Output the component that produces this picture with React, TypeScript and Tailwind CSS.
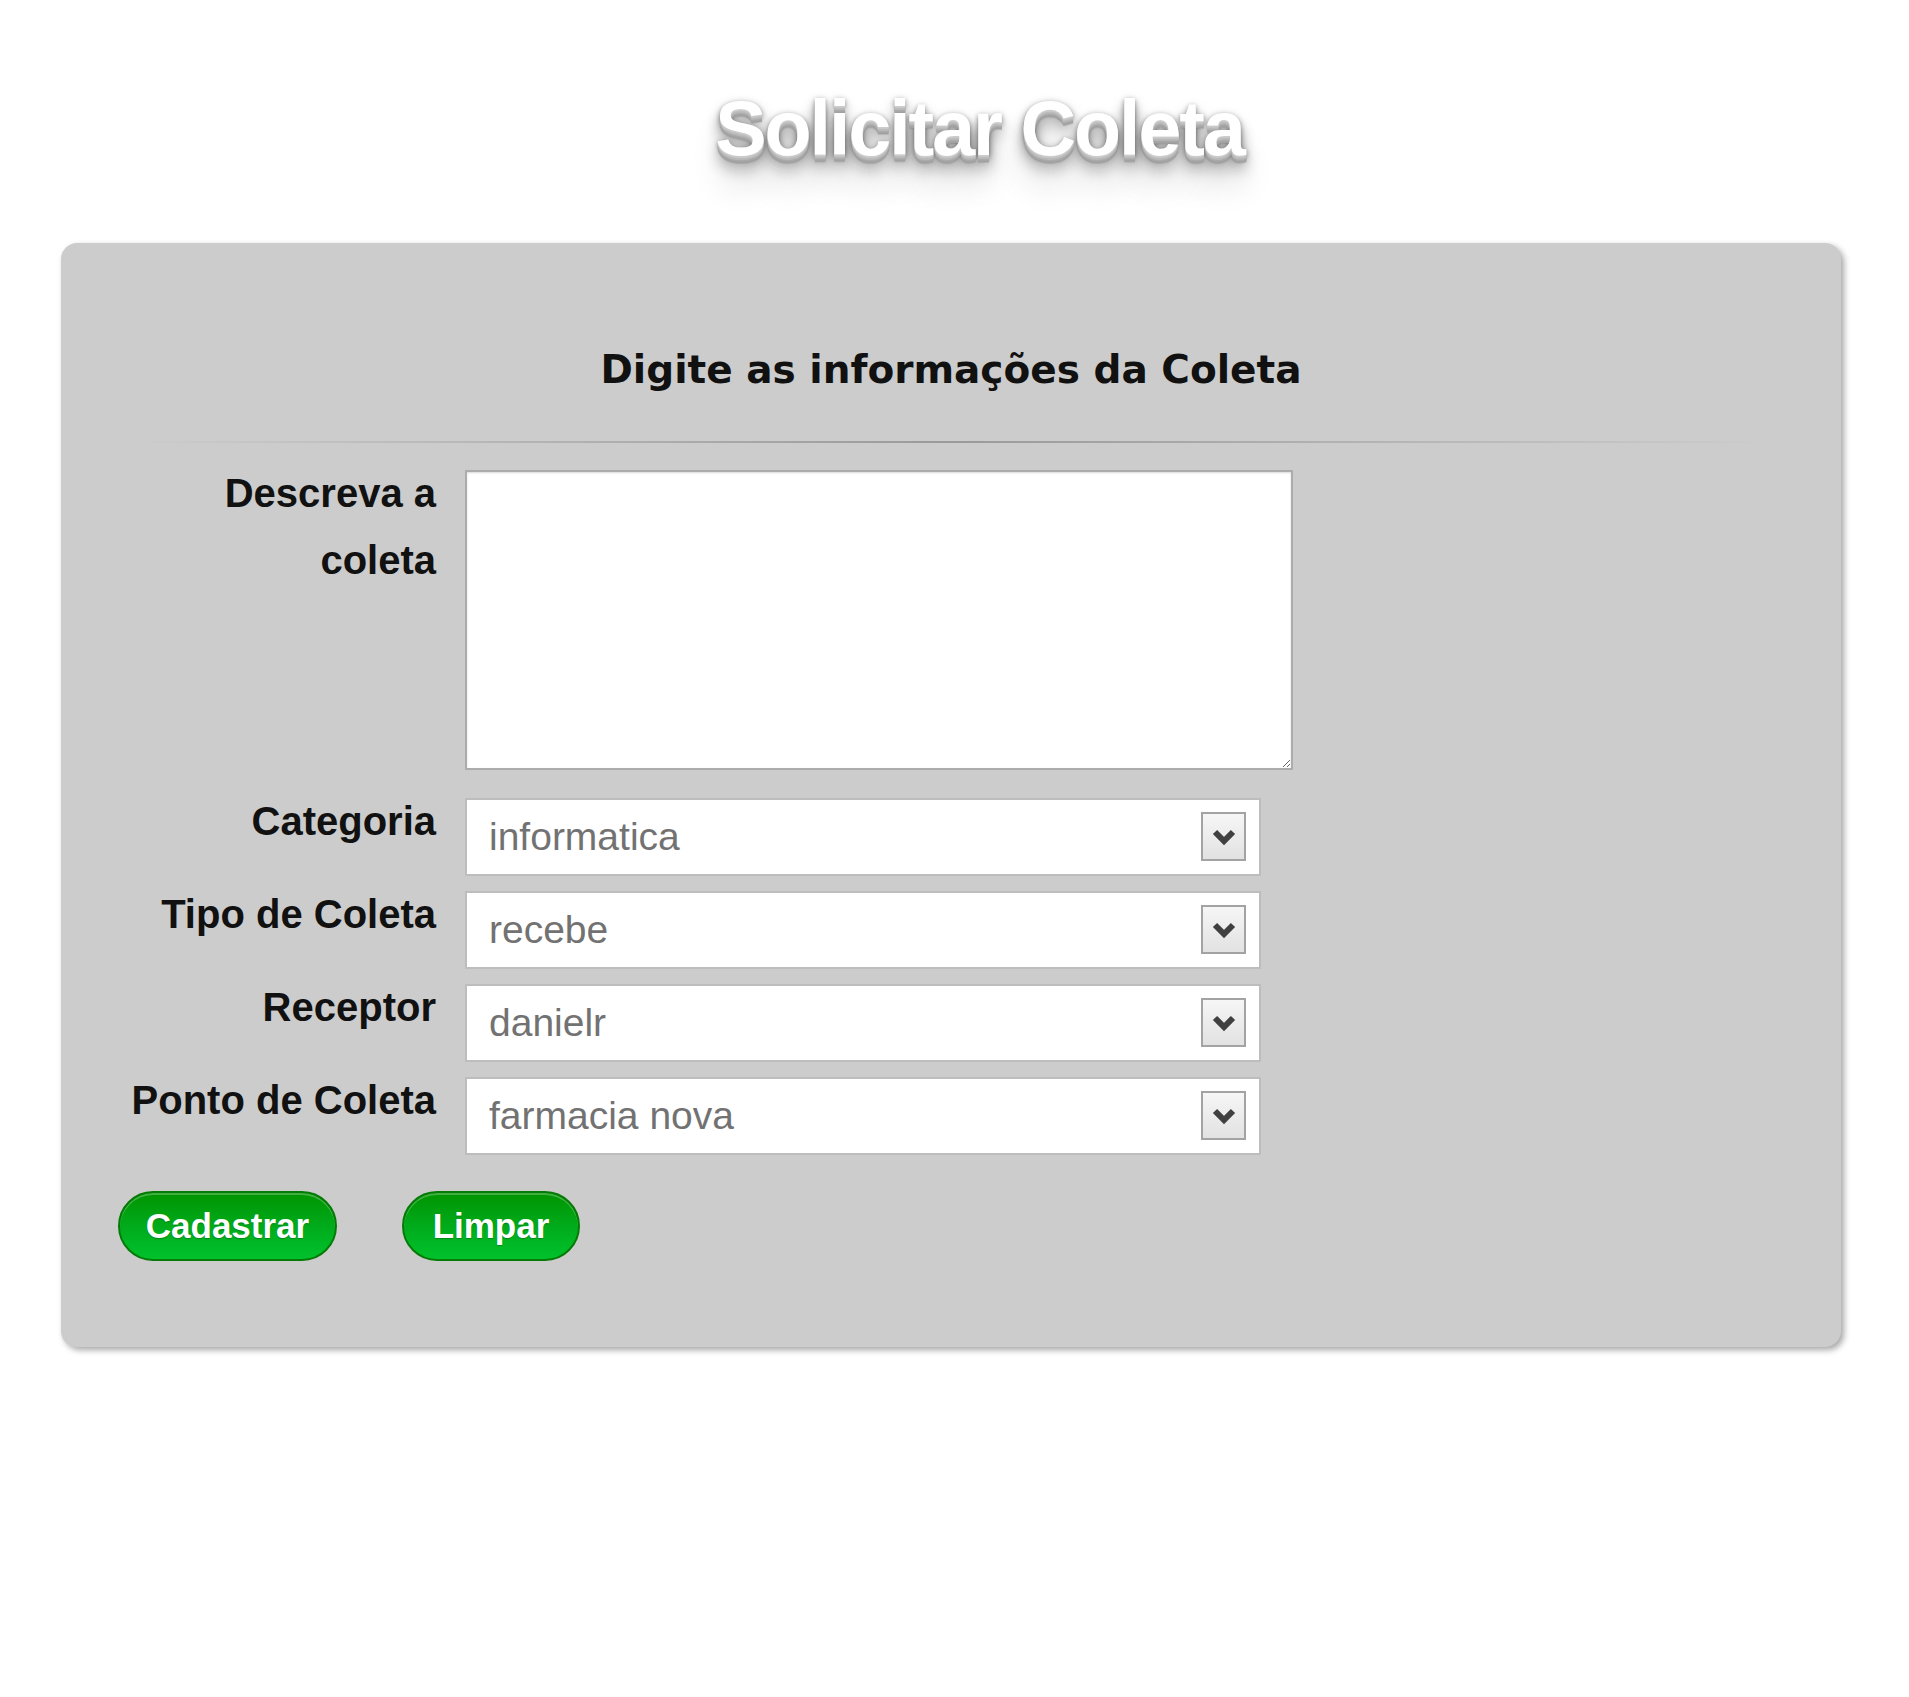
import React from "react";

const titleShadow =
  "[text-shadow:0_1px_0_#ccc,0_2px_0_#c9c9c9,0_3px_0_#bbb,0_4px_0_#b9b9b9,0_5px_0_#aaa,0_6px_0_#a5a5a5,0_7px_0_#a0a0a0,0_8px_1px_rgba(0,0,0,.1),0_0_6px_rgba(0,0,0,.1),0_2px_4px_rgba(0,0,0,.3),0_5px_8px_rgba(0,0,0,.2),0_8px_15px_rgba(0,0,0,.25),0_15px_15px_rgba(0,0,0,.2),0_30px_30px_rgba(0,0,0,.15)]";

function Chevron() {
  return (
    <svg width="24" height="18" viewBox="0 0 24 18" aria-hidden="true">
      <polyline points="3,4 12,13 21,4" fill="none" stroke="#404040" strokeWidth="6" strokeLinecap="butt" strokeLinejoin="miter" />
    </svg>
  );
}

function SelectBox({ value }: { value: string }) {
  return (
    <div className="relative w-[796px] h-[78px]">
      <select
        defaultValue={value}
        className="appearance-none w-full h-full bg-white border-2 border-[#bdbdbd] pl-[22px] text-[39px] text-[#727272] outline-none font-['Liberation_Sans',Arial,sans-serif]"
      >
        <option value={value}>{value}</option>
      </select>
      <div className="pointer-events-none absolute right-[15px] top-[14px] w-[45px] h-[49px] border-2 border-[#a3a3a3] bg-gradient-to-b from-[#f6f6f6] to-[#e2e2e2] flex items-center justify-center">
        <Chevron />
      </div>
    </div>
  );
}

function Label({ children }: { children: React.ReactNode }) {
  return (
    <div className="w-[318px] shrink-0 text-right text-[40px] leading-[67px] font-bold text-[#111] mt-[-10px] font-['Liberation_Sans',Arial,sans-serif]">
      {children}
    </div>
  );
}

export default function App() {
  return (
    <div className="min-h-[1697px] bg-white font-['Liberation_Sans',Arial,sans-serif]">
      <div className="pt-[90px] flex justify-center pl-[50px]">
        <h1
          className={`text-[77px] leading-none font-bold text-white tracking-[-2px] font-['Liberation_Sans',Arial,sans-serif] ${titleShadow}`}
        >
          Solicitar Coleta
        </h1>
      </div>

      <div className="mt-[76px] ml-[61px] w-[1780px] bg-[#cccccc] rounded-[16px] shadow-[3px_3px_6px_rgba(0,0,0,0.35)] pt-[107px] pb-[86px]">
        <h2 className="text-center text-[39px] leading-none font-bold text-[#111] font-['DejaVu_Sans',Tahoma,sans-serif]">
          Digite as informações da Coleta
        </h2>
        <div className="mt-[52px] mx-[73px] h-[2px] bg-gradient-to-r from-transparent via-[#9a9a9a] to-transparent" />

        <div className="pl-[57px] mt-[27px]">
          <div className="flex gap-[29px]">
            <Label>
              Descreva a<br />coleta
            </Label>
            <textarea className="w-[828px] h-[300px] bg-white border-2 border-[#acacac] shadow-[inset_0_1px_2px_rgba(0,0,0,0.15)] outline-none text-[30px] p-2" />
          </div>

          <div className="flex flex-col gap-[15px] mt-[28px]">
            <div className="flex gap-[29px]">
              <Label>Categoria</Label>
              <SelectBox value="informatica" />
            </div>
            <div className="flex gap-[29px]">
              <Label>Tipo de Coleta</Label>
              <SelectBox value="recebe" />
            </div>
            <div className="flex gap-[29px]">
              <Label>Receptor</Label>
              <SelectBox value="danielr" />
            </div>
            <div className="flex gap-[29px]">
              <Label>Ponto de Coleta</Label>
              <SelectBox value="farmacia nova" />
            </div>
          </div>

          <div className="flex gap-[65px] mt-[36px]">
            <button className="w-[219px] h-[70px] rounded-full border-2 border-[#067a06] bg-gradient-to-b from-[#009400] to-[#00c22c] text-white text-[35px] font-bold shadow-[inset_0_2px_0_rgba(255,255,255,0.25)] [text-shadow:0_1px_1px_rgba(0,0,0,0.25)]">
              Cadastrar
            </button>
            <button className="w-[178px] h-[70px] rounded-full border-2 border-[#067a06] bg-gradient-to-b from-[#009400] to-[#00c22c] text-white text-[35px] font-bold shadow-[inset_0_2px_0_rgba(255,255,255,0.25)] [text-shadow:0_1px_1px_rgba(0,0,0,0.25)]">
              Limpar
            </button>
          </div>
        </div>
      </div>
    </div>
  );
}
